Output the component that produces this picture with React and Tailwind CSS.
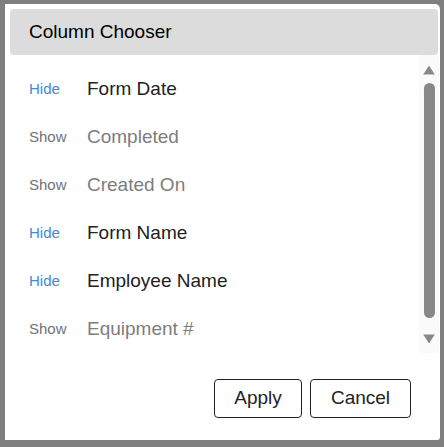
import React from "react";

const rows = [
  { action: "Hide", label: "Form Date", on: true },
  { action: "Show", label: "Completed", on: false },
  { action: "Show", label: "Created On", on: false },
  { action: "Hide", label: "Form Name", on: true },
  { action: "Hide", label: "Employee Name", on: true },
  { action: "Show", label: "Equipment #", on: false },
];

export default function App() {
  return (
    <div
      className="w-[444px] h-[447px] bg-[#7f7f7f] pt-[4px] pl-[5px] pr-[4px] pb-[7px]"
      style={{ fontFamily: '"Liberation Sans", Arial, sans-serif' }}
    >
      <div className="w-[435px] h-[436px] bg-white rounded-tr-[5px] rounded-br-[3px] flex flex-col">
        <div className="mt-[5px] ml-[5px] mr-[2px] h-[46px] shrink-0 bg-[#dcdcdc] rounded-[4px] flex items-center pl-[19px] text-[19px] text-black">
          Column Chooser
        </div>
        <div className="flex h-[298px] shrink-0">
          <div className="flex-1 pt-[10px] pl-[24px]">
            {rows.map((r, i) => (
              <div key={i} className="h-[48px] flex items-center">
                <span
                  className={`w-[58px] text-[15px] ${r.on ? "text-[#3d8bd9]" : "text-[#737373]"}`}
                >
                  {r.action}
                </span>
                <span
                  className={`text-[19px] ${r.on ? "text-[#222222]" : "text-[#7d7d7d]"}`}
                >
                  {r.label}
                </span>
              </div>
            ))}
          </div>
          <div className="w-[20px] mr-[1px] bg-[#fafafa] flex flex-col items-center">
            <svg width="12" height="10" viewBox="0 0 12 10" className="mt-[10px] shrink-0 block">
              <path d="M6 0.5 L11.8 9.5 L0.2 9.5 Z" fill="#888888" />
            </svg>
            <div className="mt-[8px] w-[11px] h-[235px] shrink-0 rounded-full bg-[#888888]" />
            <svg width="12" height="10" viewBox="0 0 12 10" className="mt-[16px] shrink-0 block">
              <path d="M0.2 0.5 L11.8 0.5 L6 9.5 Z" fill="#888888" />
            </svg>
          </div>
        </div>
        <div className="flex justify-end gap-[8px] pr-[29px] mt-[26px]">
          <button className="w-[88px] h-[39px] border border-[#222] rounded-[4px] bg-white text-[19px] text-[#222]">
            Apply
          </button>
          <button className="w-[101px] h-[39px] border border-[#222] rounded-[4px] bg-white text-[19px] text-[#222]">
            Cancel
          </button>
        </div>
      </div>
    </div>
  );
}
